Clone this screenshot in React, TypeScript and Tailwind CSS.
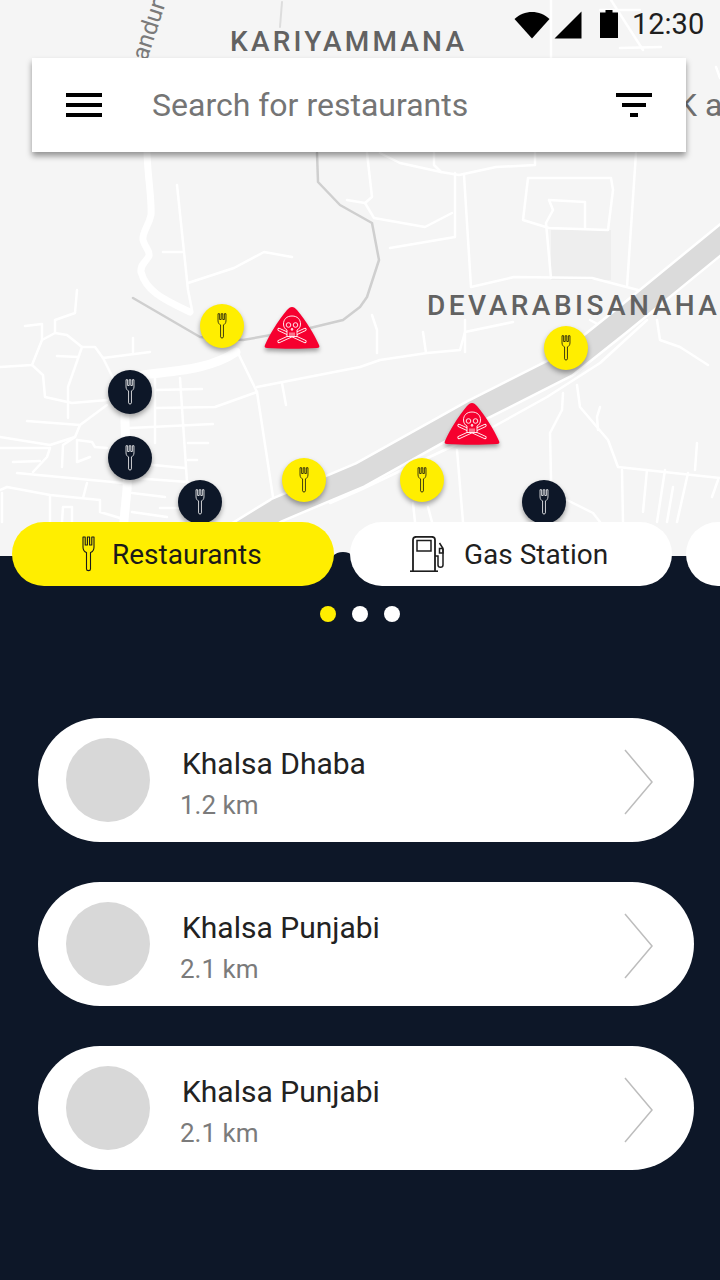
const whiteRoads: string[] = [
  "177,185 188,290 192,310", "163,252 184,252", "188,283 234,268 264,252 292,257",
  "367,153 372,197 365,203 347,200", "365,203 374,218 425,227 452,213",
  "455,173 455,237 390,248", "464,175 471,287 514,277 592,278 638,290",
  "380,153 400,163 441,172 459,175 496,167 535,165 535,153", "434,153 434,165 441,172",
  "528,178 611,178 613,190 608,230 549,228 523,220 528,178", "549,200 585,202 585,228",
  "549,200 553,210 546,223 551,278", "636,153 627,287",
  "551,0 551,60", "611,0 643,50", "620,48 661,47", "716,67 720,78", "600,10 640,10",
  "77,290 75,313 55,320 55,333 42,340 32,365 0,367", "25,326 42,324 42,340",
  "55,333 67,335 82,347 68,387 68,418", "82,347 95,347 103,358 113,378",
  "103,358 150,352", "133,352 133,338", "57,356 78,357", "32,365 43,375 45,397 72,403 107,400",
  "27,421 80,425 107,405", "80,425 75,437 50,445 0,437", "75,437 63,445 62,467",
  "77,440 77,462 90,457", "77,440 92,442 95,447 107,448", "0,448 50,448 47,457 33,472",
  "13,462 40,461", "17,473 123,483", "0,490 7,487 50,495 100,500 100,512 120,518",
  "87,483 83,498", "50,495 50,522", "62,522 63,507 72,507 72,522", "2,493 2,522",
  "155,390 202,389", "180,378 188,497 188,522", "155,377 155,443",
  "155,408 215,407 257,392", "130,428 213,424", "188,443 208,443", "188,460 197,460",
  "153,465 185,468", "133,478 188,482", "132,493 165,497", "132,512 167,517", "160,508 178,508",
  "238,353 257,392 273,497", "257,387 360,367 380,360 427,353 460,350 465,332 513,322",
  "282,383 286,405", "423,332 426,353", "372,315 377,330 377,353", "465,320 465,352",
  "647,320 600,363 547,397 493,427 360,490 330,503", "657,320 660,340 680,347 708,365", "590,320 603,327",
  "563,393 562,410 550,433 552,522", "577,385 580,407 608,440 618,467 720,478",
  "600,407 597,417 598,430", "622,470 623,522", "647,470 643,512", "665,470 657,522",
  "673,487 667,522", "688,473 677,522", "697,443 695,470", "718,480 712,497",
  "457,450 463,522", "567,500 593,513 600,522", "413,503 415,522", "428,507 432,522",
]

const markers = [
  { pos: "left-[200px] top-[304px]", dark: false },
  { pos: "left-[544px] top-[326px]", dark: false },
  { pos: "left-[282px] top-[458px]", dark: false },
  { pos: "left-[400px] top-[458px]", dark: false },
  { pos: "left-[108px] top-[370px]", dark: true },
  { pos: "left-[108px] top-[436px]", dark: true },
  { pos: "left-[178px] top-[480px]", dark: true },
  { pos: "left-[522px] top-[480px]", dark: true },
]

const places = [
  { name: "Khalsa Dhaba", distance: "1.2 km" },
  { name: "Khalsa Punjabi", distance: "2.1 km" },
  { name: "Khalsa Punjabi", distance: "2.1 km" },
]

const highway = "730,232 620,322 566,365 473,412 360,475 277,510 225,542"

const Fork = ({ className }: { className: string }) => (
  <svg viewBox="0 0 13 36" fill="none" stroke="currentColor" strokeWidth="1.100" strokeLinejoin="round" className={className}>
    <path d="M1 1H3.2V9H5.4V1H7.6V9H9.8V1H12V11C12 14 10 16 8.5 16.5V33C8.5 35.2 4.5 35.2 4.5 33V16.5C3 16 1 14 1 11Z" />
  </svg>
)

const Skull = ({ className }: { className: string }) => (
  <svg viewBox="0 0 56 43" className={className}>
    <path d="M28 1C30 1 31 2 33 4C43 16 50 28 55 39C56 41 55 42 53 42C37 43 19 43 3 42C1 42 0 41 1 39C6 28 13 16 23 4C25 2 26 1 28 1Z" fill="#f6002f" />
    <g fill="none" strokeLinecap="round">
      <path d="M15 23.500L41 35.500M41 23.500L15 35.500" stroke="#ffffff" strokeWidth="3.200" />
      <path d="M15 23.500L41 35.500M41 23.500L15 35.500" stroke="#f6002f" strokeWidth="1.500" />
    </g>
    <g fill="#f6002f" stroke="#ffffff" strokeWidth="0.900" strokeLinejoin="round">
      <path d="M28 10C22.500 10 19.500 13.500 19.500 18C19.500 21 21 23 23 24V30.500H33V24C35 23 36.500 21 36.500 18C36.500 13.500 33.500 10 28 10Z" />
      <circle cx="24.500" cy="19" r="2.300" />
      <circle cx="31.500" cy="19" r="2.300" />
      <path d="M27 24L28 22L29 24ZM26 26.500V30.500M28 26.500V30.500M30 26.500V30.500" />
    </g>
  </svg>
)

const GasPump = () => (
  <svg viewBox="0 0 34 36" fill="none" stroke="#1d1d1d" strokeWidth="1.500" className="h-[36px] w-[34px]">
    <path d="M3 35V4C3 2 4.500 0.800 6.500 0.800H21.500C23.500 0.800 25 2 25 4V35" strokeWidth="1.800" />
    <rect x="7" y="4.500" width="14" height="10.500" />
    <path d="M0 35.300H28" strokeWidth="1.800" />
    <path d="M25 20H28V29C28 32 33 32 33 29V13" />
    <path d="M29.500 12.500H33V17H29.500ZM33 12.500L29.500 7" />
  </svg>
)

export default function App() {
  return (
    <div className="flex h-[1280px] w-[720px] flex-col overflow-hidden bg-[#0d1728] font-['Roboto',sans-serif]">
      <section className="relative h-[556px] shrink-0 overflow-hidden bg-[#f5f5f5]">
        <svg viewBox="0 0 720 556" fill="none" strokeLinejoin="round" strokeLinecap="round" className="absolute inset-0 h-full w-full">
          <rect x="551" y="230" width="60" height="50" fill="#eeeeee" />
          {whiteRoads.map((points) => (
            <polyline key={points} points={points} stroke="#ffffff" strokeWidth="2.500" />
          ))}
          <path d="M147 153C148 180 152 200 151 215C148 228 142 232 143 240C145 248 150 250 149 256C146 262 140 264 141 272C146 290 160 298 190 312" stroke="#ffffff" strokeWidth="7" />
          <path d="M236 352C215 366 190 370 150 374C132 376 125 380 125 400V423C126 450 128 470 127 490L123 530" stroke="#ffffff" strokeWidth="9" />
          <polyline points="282,2 280,27" stroke="#dddddd" strokeWidth="2" />
          <polyline points="317,153 318,182 340,205 372,223 379,260 367,297 360,307 343,320 310,328 243,340 200,337 133,298" stroke="#cfcfcf" strokeWidth="2.500" />
          <polyline points={highway} stroke="#ffffff" strokeWidth="27" strokeLinecap="butt" />
          <polyline points={highway} stroke="#dbdbdb" strokeWidth="22" strokeLinecap="butt" />
        </svg>

        <span className="absolute left-[230px] top-[26px] text-[28px] font-medium leading-[32px] tracking-[3.2px] text-[#626262]">KARIYAMMANA</span>
        <span className="absolute left-[427px] top-[290px] whitespace-nowrap text-[28px] font-medium leading-[32px] tracking-[3.5px] text-[#626262]">DEVARABISANAHA</span>
        <span className="absolute left-[118px] top-[16px] rotate-[-72deg] text-[24px] leading-[28px] text-[#7a7a7a]">andur</span>
        <span className="absolute left-[677px] top-[87px] whitespace-nowrap text-[32px] leading-[36px] text-[#6f6f6f]">K a</span>

        {markers.map((marker) => (
          <div
            key={marker.pos}
            className={`absolute flex h-[44px] w-[44px] items-center justify-center rounded-full shadow-[0_3px_5px_rgba(0,0,0,0.35)] ${marker.pos} ${marker.dark ? "bg-[#0d1728] text-white" : "bg-[#ffee00] text-[#111111]"}`}
          >
            <Fork className="h-[26px] w-[10px]" />
          </div>
        ))}

        <div className="absolute left-[264px] top-[306px] drop-shadow-[0_3px_2px_rgba(0,0,0,0.35)]">
          <Skull className="h-[43px] w-[56px]" />
        </div>
        <div className="absolute left-[444px] top-[402px] drop-shadow-[0_3px_2px_rgba(0,0,0,0.35)]">
          <Skull className="h-[43px] w-[56px]" />
        </div>

        <div className="absolute left-[514px] top-0 flex h-[48px] items-center text-[#1f1f1f]">
          <svg viewBox="0 0 36 28" className="mt-[1px] h-[28px] w-[36px]"><path d="M0.500 8C10 -1.500 26 -1.500 35.500 8L18 27.500Z" fill="#000000" /></svg>
          <svg viewBox="0 0 28 28" className="ml-[4px] mt-[1px] h-[28px] w-[28px]"><path d="M27.500 0.500V27.500H0.500Z" fill="#000000" /></svg>
          <svg viewBox="0 0 18 28" className="ml-[18px] h-[28px] w-[18px]"><path d="M5.500 0H12.500V2.500H18V28H0V2.500H5.500Z" fill="#000000" /></svg>
          <span className="ml-[14px] text-[29px] leading-[48px]">12:30</span>
        </div>

        <div className="absolute left-[32px] top-[58px] flex h-[94px] w-[654px] items-center bg-white px-[34px] shadow-[0_4px_6px_rgba(0,0,0,0.4)]">
          <div className="flex h-[24px] w-[36px] shrink-0 flex-col justify-between">
            <div className="h-[4px] bg-black" />
            <div className="h-[4px] bg-black" />
            <div className="h-[4px] bg-black" />
          </div>
          <span className="ml-[50px] flex-1 text-[32px] leading-[40px] text-[#757575]">Search for restaurants</span>
          <div className="flex h-[24px] w-[36px] shrink-0 flex-col items-center justify-between">
            <div className="h-[4px] w-[36px] bg-black" />
            <div className="h-[4px] w-[24px] bg-black" />
            <div className="h-[4px] w-[8px] bg-black" />
          </div>
        </div>
      </section>

      <section className="relative flex-1">
        <div className="absolute left-[328px] top-[-4px] h-[16px] w-[30px] rounded-t-full bg-[#0d1728]" />
        <div className="relative -mt-[34px] flex gap-[16px] pl-[12px]">
          <div className="flex h-[64px] w-[322px] shrink-0 items-center rounded-[32px] bg-[#ffee00] pl-[70px] text-[#1a1a1a]">
            <Fork className="h-[36px] w-[13px]" />
            <span className="ml-[17px] mt-[2px] text-[28px] leading-[34px]">Restaurants</span>
          </div>
          <div className="flex h-[64px] w-[322px] shrink-0 items-center rounded-[32px] bg-white pl-[60px] text-[#1f1f1f]">
            <GasPump />
            <span className="ml-[20px] mt-[2px] text-[28px] leading-[34px]">Gas Station</span>
          </div>
          <div className="-ml-[2px] h-[64px] w-[322px] shrink-0 rounded-[32px] bg-white" />
        </div>

        <div className="mt-[20px] flex justify-center gap-[16px]">
          <div className="h-[16px] w-[16px] rounded-full bg-[#ffee00]" />
          <div className="h-[16px] w-[16px] rounded-full bg-white" />
          <div className="h-[16px] w-[16px] rounded-full bg-white" />
        </div>

        <div className="ml-[38px] mt-[96px] flex w-[656px] flex-col gap-[40px]">
          {places.map((place, index) => (
            <div key={index} className="flex h-[124px] items-center rounded-[62px] bg-white pl-[28px] pr-[40px]">
              <div className="h-[84px] w-[84px] shrink-0 rounded-full bg-[#d8d8d8]" />
              <div className="ml-[30px] flex-1 pt-[7px]">
                <p className="ml-[2px] text-[30px] leading-[36px] text-[#222222]">{place.name}</p>
                <p className="mt-[7px] text-[26px] leading-[32px] text-[#7b7b7b]">{place.distance}</p>
              </div>
              <svg viewBox="0 0 30 66" fill="none" stroke="#bdbdbd" strokeWidth="1.500" className="mt-[4px] h-[66px] w-[30px] shrink-0">
                <path d="M1 1L28 33L1 65" />
              </svg>
            </div>
          ))}
        </div>
      </section>
    </div>
  )
}
